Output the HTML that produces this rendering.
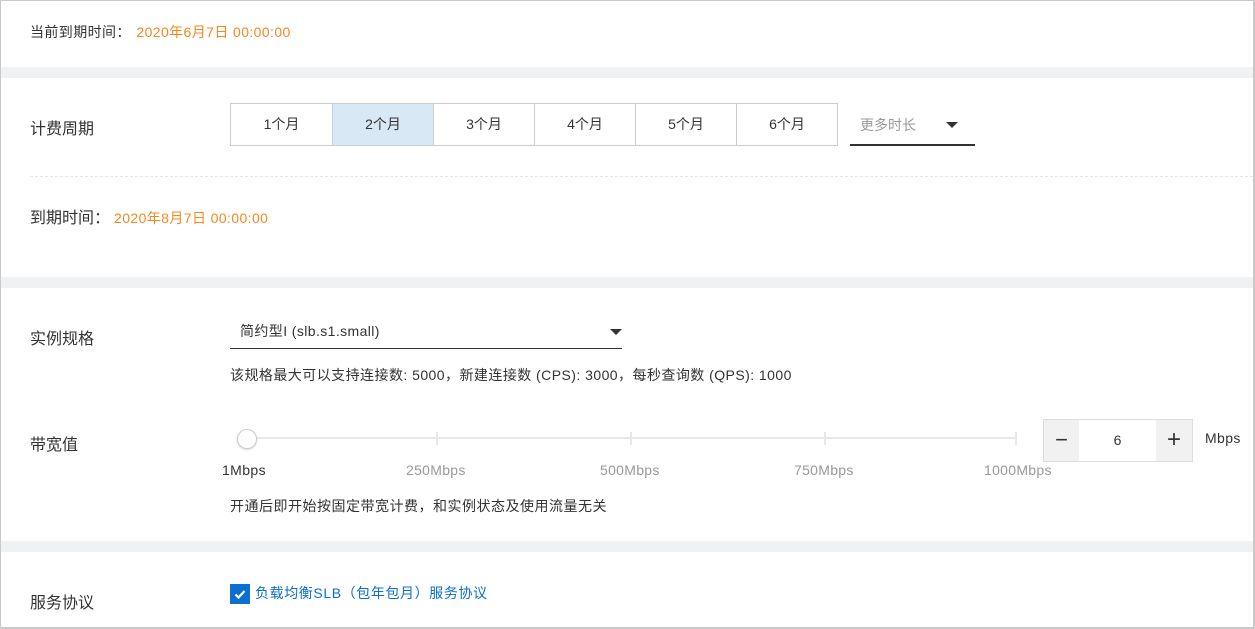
<!DOCTYPE html>
<html><head><meta charset="utf-8"><style>
*{box-sizing:border-box;margin:0;padding:0}
body{width:1255px;height:629px;background:#fff;font-family:"Liberation Sans","Noto Sans CJK SC",sans-serif;color:#333;position:relative;overflow:hidden}
.frame{position:absolute;left:0;top:0;width:1255px;height:629px;border:1px solid #c8c8c8;border-right:2px solid #c8c8c8;border-bottom:2px solid #c8c8c8}
.band{position:absolute;left:1px;width:1252px;height:11px;background:#f0f1f3}
.a{position:absolute;white-space:nowrap}
.ls{letter-spacing:0.4px}
.lbl{font-size:16px;color:#333}
.or{color:#f7871d}
.tabs{position:absolute;left:230px;top:103px;height:43px;display:flex;border:1px solid #ccc}
.tabs div{width:101px;height:41px;line-height:41px;text-align:center;font-size:14px;border-left:1px solid #ccc;color:#333}
.tabs div:first-child{border-left:none}
.tabs .on{background:#d8e8f5;border-left-color:#b8d3ea}
.tri{position:absolute;width:0;height:0;border-left:6px solid transparent;border-right:6px solid transparent;border-top:6px solid #333}
.tick{position:absolute;top:432px;width:2px;height:13px;background:#e8e8e8}
.sm{font-size:14px;color:#999;letter-spacing:0.3px}
</style></head><body>
<div class="frame"></div>
<div class="a ls" style="left:30px;top:22px;font-size:14px">当前到期时间<span style="letter-spacing:6px">：</span><span class="or">2020年6月7日 00:00:00</span></div>
<div class="band" style="top:67px"></div>
<div class="a lbl" style="left:30px;top:115px">计费周期</div>
<div class="tabs"><div>1个月</div><div class="on">2个月</div><div>3个月</div><div>4个月</div><div>5个月</div><div>6个月</div></div>
<div class="a" style="left:860px;top:115px;font-size:14px;color:#999">更多时长</div>
<div class="tri" style="left:946px;top:122px"></div>
<div class="a" style="left:850px;top:144px;width:125px;height:2px;background:#333"></div>
<div class="a" style="left:30px;top:176px;width:1223px;border-top:1px dashed #e6e6e6"></div>
<div class="a" style="left:30px;top:204px;font-size:16px">到期时间<span style="letter-spacing:4px">：</span><span class="or ls" style="font-size:14px">2020年8月7日 00:00:00</span></div>
<div class="band" style="top:277px"></div>
<div class="a lbl" style="left:30px;top:325px">实例规格</div>
<div class="a ls" style="left:240px;top:321px;font-size:14px">简约型I (slb.s1.small)</div>
<div class="tri" style="left:610px;top:329px"></div>
<div class="a" style="left:230px;top:348px;width:392px;height:1px;background:#333"></div>
<div class="a" style="left:230px;top:365px;font-size:14px;letter-spacing:0.45px">该规格最大可以支持连接数: 5000，新建连接数 (CPS): 3000，每秒查询数 (QPS): 1000</div>
<div class="a lbl" style="left:30px;top:431px">带宽值</div>
<div class="a" style="left:247px;top:437px;width:770px;height:2px;background:#e8e8e8"></div>
<div class="tick" style="left:436px"></div><div class="tick" style="left:630px"></div><div class="tick" style="left:824px"></div><div class="tick" style="left:1015px"></div>
<div class="a" style="left:237px;top:429px;width:20px;height:20px;border-radius:50%;background:#fff;border:1px solid #ccc;box-shadow:0 1px 2px rgba(0,0,0,.15)"></div>
<div class="a ls" style="left:222px;top:462px;font-size:14px;color:#333">1Mbps</div>
<div class="a sm" style="left:406px;top:462px">250Mbps</div>
<div class="a sm" style="left:600px;top:462px">500Mbps</div>
<div class="a sm" style="left:794px;top:462px">750Mbps</div>
<div class="a sm" style="left:984px;top:462px">1000Mbps</div>
<div class="a" style="left:1043px;top:419px;width:150px;height:43px;border:1px solid #ddd;background:#fff">
<div style="position:absolute;left:0;top:0;width:35px;height:41px;background:#f1f1f1;font-size:22px;line-height:40px;text-align:center;color:#333">−</div>
<div style="position:absolute;left:35px;top:0;width:77px;height:41px;line-height:41px;text-align:center;font-size:14px">6</div>
<div style="position:absolute;left:112px;top:0;width:36px;height:41px;background:#f1f1f1;font-size:24px;line-height:40px;text-align:center;color:#333">+</div>
</div>
<div class="a ls" style="left:1205px;top:430px;font-size:14px">Mbps</div>
<div class="a" style="left:230px;top:496px;font-size:14px;letter-spacing:0.5px">开通后即开始按固定带宽计费，和实例状态及使用流量无关</div>
<div class="band" style="top:541px"></div>
<div class="a lbl" style="left:30px;top:589px">服务协议</div>
<div class="a" style="left:230px;top:584px;width:20px;height:20px;background:#0a6fd0"><svg width="20" height="20" viewBox="0 0 20 20"><path d="M5.5 10.5l3 3 6-6.5" stroke="#fff" stroke-width="2.2" fill="none"/></svg></div>
<div class="a" style="left:255px;top:583px;font-size:14px;color:#0a6fd0;letter-spacing:0.6px">负载均衡SLB（包年包月）服务协议</div>
</body></html>
